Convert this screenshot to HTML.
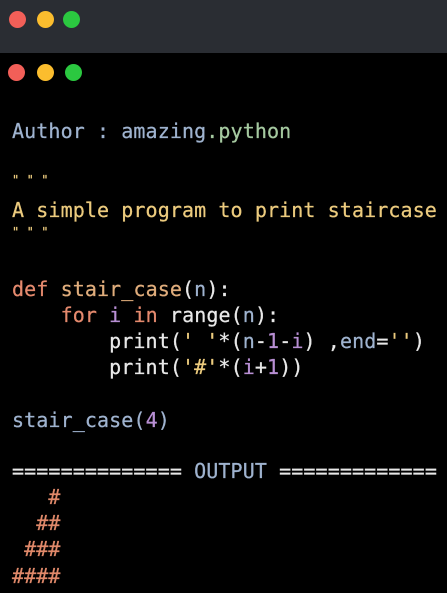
<!DOCTYPE html>
<html><head><meta charset="utf-8"><style>
html,body{margin:0;padding:0;width:447px;height:593px;background:#000;overflow:hidden}
.bar{position:absolute;left:0;top:0;width:447px;height:53px;background:#2a2d33}
.d{position:absolute;width:17px;height:17px;border-radius:50%}
.r{background:#f25f58}.y{background:#fbbd2e}.g{background:#2bc840}
.l{position:absolute;left:12px;height:26px;line-height:26px;font-family:"DejaVu Sans Mono","Liberation Mono",monospace;font-size:20px;color:#e8e8e8;white-space:pre;letter-spacing:0.1px;-webkit-text-stroke:0.25px currentColor}
.b{color:#9fb3cf}.gr{color:#a5c9a0}.ye{color:#eccb7e}.or{color:#e58a6e}.fn{color:#e0ad7c}.pu{color:#b88fd4}.h{color:#e0896a}
</style></head><body>
<div class="bar"></div>
<div class="d r" style="left:9px;top:11px"></div>
<div class="d y" style="left:37px;top:11px"></div>
<div class="d g" style="left:63px;top:11px"></div>
<div class="d r" style="left:8px;top:64px"></div>
<div class="d y" style="left:37px;top:64px"></div>
<div class="d g" style="left:65px;top:64px"></div>

<div class="l b" style="top:118px">Author : amazing<span class="gr">.python</span></div>
<div class="l ye" style="top:167px;font-size:12px">" " "</div>
<div class="l ye" style="top:197px">A simple program to print staircase</div>
<div class="l ye" style="top:219px;font-size:12px">" " "</div>
<div class="l" style="top:276px"><span class="or">def</span> <span class="fn">stair_case</span>(<span class="b">n</span>):</div>
<div class="l" style="top:302px">    <span class="or">for</span> <span class="pu">i</span> <span class="or">in</span> range(<span class="b">n</span>):</div>
<div class="l" style="top:328px">        print(<span class="ye">' '</span>*(<span class="b">n</span>-<span class="pu">1</span>-<span class="pu">i</span>) ,<span class="b">end</span>=<span class="ye">''</span>)</div>
<div class="l" style="top:354px">        print(<span class="ye">'#'</span>*(<span class="pu">i</span>+<span class="pu">1</span>))</div>
<div class="l b" style="top:407px">stair_case(<span class="pu">4</span>)</div>
<div class="l" style="top:458px">============== <span class="b">OUTPUT</span> =============</div>
<div class="l h" style="top:484px">   #</div>
<div class="l h" style="top:510px">  ##</div>
<div class="l h" style="top:536px"> ###</div>
<div class="l h" style="top:563px">####</div>
</body></html>
